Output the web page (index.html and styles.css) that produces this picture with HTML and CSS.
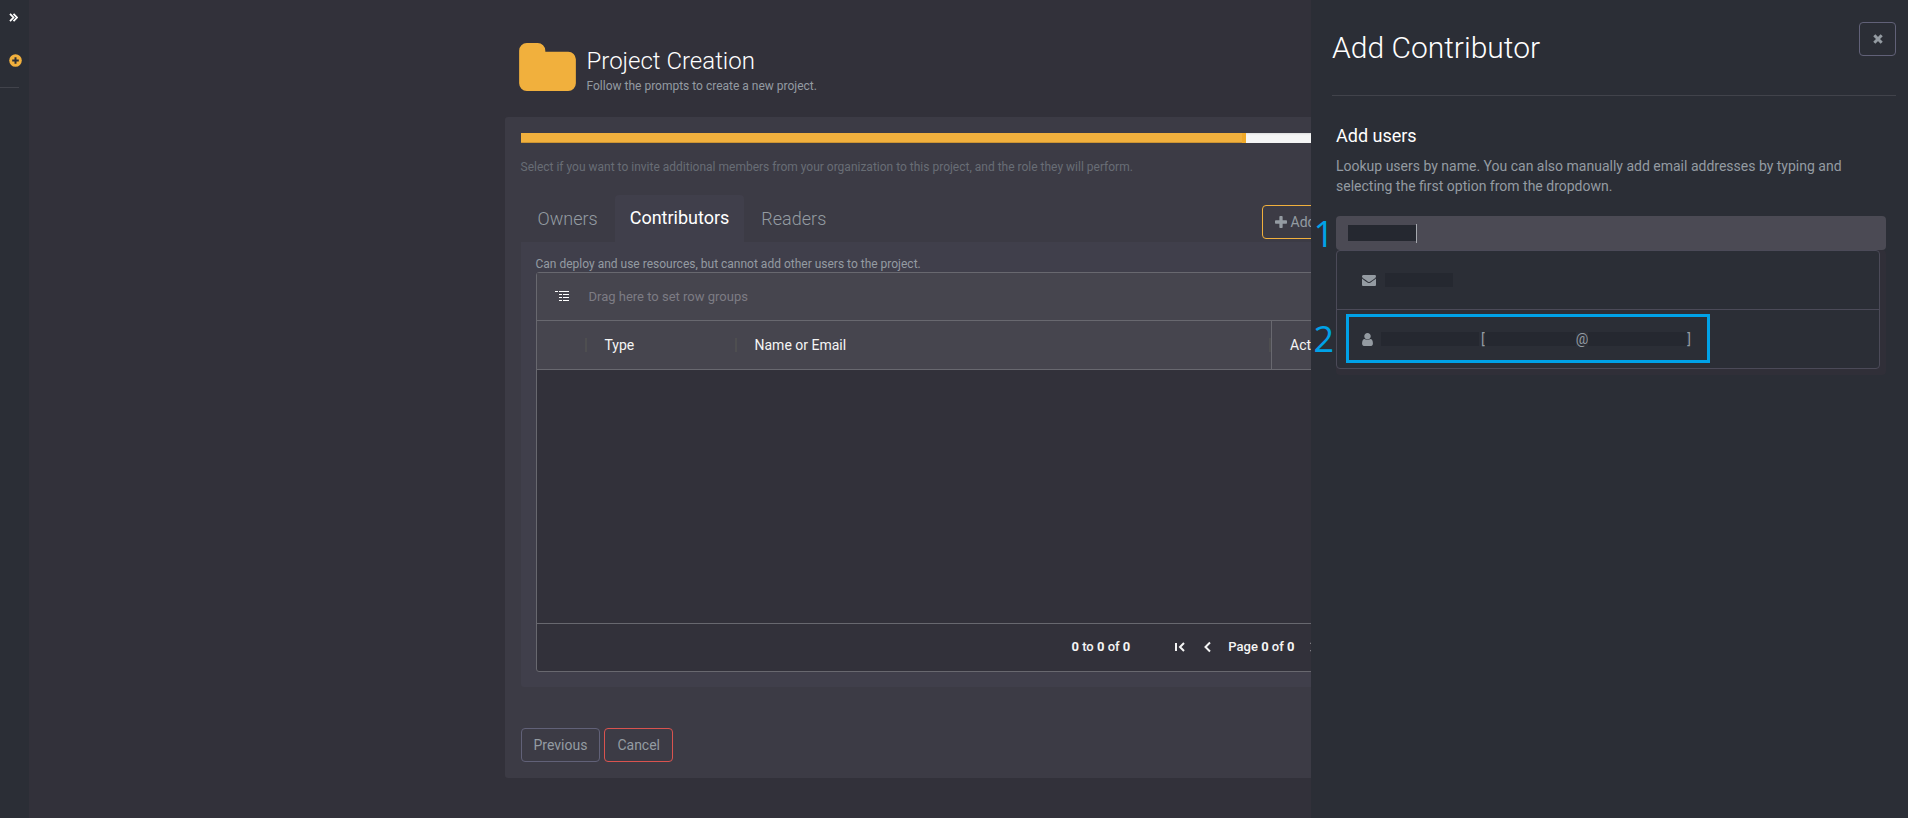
FILE: index.html
```html
<!DOCTYPE html>
<html lang="en">
<head>
    <meta charset="UTF-8">
    <meta name="viewport" content="width=device-width, initial-scale=1.0">
    <title>Project Creation</title>
    <link rel="stylesheet" href="styles.css">
</head>
<body>
    <nav class="sidebar">
        <button class="side-button" aria-label="Expand menu">
            <svg width="9" height="9" viewBox="0 0 9 9"><path d="M1 .8l3.500 3.700L1 8.200M4.500 .8L8 4.500 4.500 8.200" fill="none" stroke="#fff" stroke-width="1.800"/></svg>
        </button>
        <button class="side-button side-add" aria-label="New project">
            <svg width="13" height="13" viewBox="0 0 13 13"><circle cx="6.500" cy="6.500" r="6.300" fill="#f1b03d"/><path d="M6.500 3.200v6.600M3.200 6.500h6.600" stroke="#2b2e36" stroke-width="2"/></svg>
        </button>
        <hr>
    </nav>

    <main class="main">
        <div class="container">
            <header class="page-header">
                <svg class="folder" viewBox="64 128 1664 1408"><path fill="#f1b03d" d="M1728 608v704q0 92-66 158t-158 66h-1216q-92 0-158-66t-66-158v-960q0-92 66-158t158-66h320q92 0 158 66t66 158v32h672q92 0 158 66t66 158z"/></svg>
                <div>
                    <h1>Project Creation</h1>
                    <p>Follow the prompts to create a new project.</p>
                </div>
            </header>

            <section class="card">
                <div class="progress"><div class="progress-bar" style="width: 81%"></div></div>
                <p class="hint">Select if you want to invite additional members from your organization to this project, and the role they will perform.</p>

                <div class="tab-row">
                    <div class="tabs" role="tablist">
                        <button class="tab" role="tab">Owners</button>
                        <button class="tab active" role="tab">Contributors</button>
                        <button class="tab" role="tab">Readers</button>
                    </div>
                    <button class="btn btn-add">
                        <svg width="12" height="12" viewBox="192 128 1408 1408"><path fill="currentColor" d="M1600 736v192q0 40-28 68t-68 28h-416v416q0 40-28 68t-68 28h-192q-40 0-68-28t-28-68v-416h-416q-40 0-68-28t-28-68v-192q0-40 28-68t68-28h416v-416q0-40 28-68t68-28h192q40 0 68 28t28 68v416h416q40 0 68 28t28 68z"/></svg>
                        Add Contributor
                    </button>
                </div>

                <div class="panel">
                    <p class="panel-text">Can deploy and use resources, but cannot add other users to the project.</p>
                    <div class="grid">
                        <div class="group-row">
                            <svg width="14" height="11" viewBox="0 0 14 11"><path d="M0 .5h3M4 .5h10M4 3.500h3M8 3.500h6M4 6.500h3M8 6.500h6M4 9.500h3M8 9.500h6" stroke="#fff" stroke-width="1"/></svg>
                            <span>Drag here to set row groups</span>
                        </div>
                        <table class="grid-table">
                            <thead>
                                <tr>
                                    <th class="col-check"></th>
                                    <th class="col-type">Type</th>
                                    <th class="col-name">Name or Email</th>
                                    <th class="col-actions">Actions</th>
                                </tr>
                            </thead>
                        </table>
                        <div class="grid-body"></div>
                        <div class="paging">
                            <span class="paging-summary"><b>0</b> to <b>0</b> of <b>0</b></span>
                            <button aria-label="First page"><svg width="16" height="16" viewBox="0 0 16 16"><path d="M4 4v8M12 4L8 8l4 4"/></svg></button>
                            <button aria-label="Previous page"><svg width="16" height="16" viewBox="0 0 16 16"><path d="M10 3.500L5.500 8l4.500 4.500"/></svg></button>
                            <span>Page <b>0</b> of <b>0</b></span>
                            <button aria-label="Next page"><svg width="16" height="16" viewBox="0 0 16 16"><path d="M4 3.500L8.500 8 4 12.500"/></svg></button>
                            <button aria-label="Last page"><svg width="16" height="16" viewBox="0 0 16 16"><path d="M12 4v8M4 4l4 4-4 4"/></svg></button>
                        </div>
                    </div>
                </div>

                <div class="actions">
                    <button class="btn">Previous</button>
                    <button class="btn btn-danger">Cancel</button>
                </div>
            </section>
        </div>
    </main>

    <aside class="drawer">
        <div class="drawer-header">
            <h2>Add Contributor</h2>
            <button class="btn btn-close" aria-label="Close">
                <svg width="10" height="10" viewBox="0 0 10 10"><path d="M1.300 1.300l7.400 7.400M8.700 1.300L1.300 8.700" stroke="currentColor" stroke-width="3"/></svg>
            </button>
        </div>
        <div class="drawer-body">
            <h3><label for="lookup">Add users</label></h3>
            <p>Lookup users by name. You can also manually add email addresses by typing and selecting the first option from the dropdown.</p>

            <div class="lookup">
                <div class="field">
                    <span class="mask mask-query"></span>
                    <span class="caret"></span>
                    <input type="text" id="lookup">
                </div>
                <span class="step step-one">1</span>
                <div class="menu-shadow">
                    <ul class="menu">
                        <li>
                            <svg class="mail-icon" width="14" height="11" viewBox="0 256 1792 1408"><path fill="currentColor" d="M1792 710v794q0 66-47 113t-113 47h-1472q-66 0-113-47t-47-113v-794q44 49 101 87 362 246 497 345 57 42 92.500 65.500t94.500 48 110 24.500h2q51 0 110-24.500t94.500-48 92.500-65.500q170-123 498-345 57-39 100-87zm0-294q0 79-49 151t-122 123q-376 261-468 325-10 7-42.500 31t-54 38.500-52 32.500-57.500 27-50 9h-2q-23 0-50-9t-57.500-27-52-32.500-54-38.500-42.500-31q-91-64-262-182.500t-205-142.500q-62-42-117-115.500t-55-136.500q0-78 41.500-130t118.500-52h1472q65 0 112.500 47t47.500 113z"/></svg>
                            <span class="mask mask-email"></span>
                        </li>
                        <li>
                            <svg class="user-icon" width="11" height="13" viewBox="256 128 1280 1536"><path fill="currentColor" d="M1536 1399q0 109-62.500 187t-150.500 78h-854q-88 0-150.500-78t-62.500-187q0-85 8.500-160.500t31.500-152 58.500-131 94-89 134.500-34.500q131 128 313 128t313-128q76 0 134.500 34.500t94 89 58.500 131 31.500 152 8.500 160.500zm-256-887q0 159-112.500 271.500t-271.500 112.500-271.500-112.500-112.500-271.500 112.500-271.500 271.500-112.500 271.500 112.500 112.500 271.500z"/></svg>
                            <span class="mask mask-name"></span>
                            <span>[</span><span class="mask mask-user"></span><span>@</span><span class="mask mask-domain"></span><span>]</span>
                            <div class="highlight"></div>
                        </li>
                    </ul>
                </div>
                <span class="step step-two">2</span>
            </div>
        </div>
    </aside>
</body>
</html>
```
FILE: styles.css
```css
* {
    box-sizing: border-box;
}
body {
    margin: 0;
    min-height: 100vh;
    display: flex;
    overflow: hidden;
    background: #32313a;
    color: #949ba2;
    font-family: Roboto, "Liberation Sans", sans-serif;
    font-size: 14px;
    line-height: 20px;
}
h1, h2, h3, p, ul {
    margin: 0;
    padding: 0;
}
button {
    font: inherit;
    color: inherit;
    background: none;
    border: 0;
    padding: 0;
    cursor: pointer;
}
svg {
    display: block;
    flex: none;
}

/* left rail */
.sidebar {
    flex: none;
    width: 29px;
    background: #2b2e36;
    padding-top: 11px;
}
.side-button {
    display: block;
    height: 12px;
    margin-left: 9px;
}
.side-add {
    height: 13px;
    margin-top: 31px;
}
.sidebar hr {
    width: 19px;
    margin: 20px 0 0;
    border: 0;
    border-top: 1px solid #41434b;
}

/* page */
.main {
    flex: 1;
    min-width: 0;
    padding-top: 43px;
}
.container {
    max-width: 928px;
    margin: 0 auto;
}
.page-header {
    display: flex;
    gap: 11px;
    padding-left: 14px;
    height: 74px;
}
.folder {
    width: 57px;
    height: 48px;
}
.page-header h1 {
    color: #fff;
    font-size: 24px;
    font-weight: 300;
    line-height: 36px;
}
.page-header p {
    font-size: 12px;
    line-height: 14px;
}
.card {
    background: #3c3b45;
    border-radius: 3px;
    padding: 16px;
}
.progress {
    height: 10px;
    background: #f5f5f5;
    box-shadow: inset 0 1px 2px rgba(0, 0, 0, 0.1);
}
.progress-bar {
    height: 10px;
    background: #f1b03d;
    border-right: 4px solid #f0a928;
    box-shadow: inset 0 -1px 0 rgba(0, 0, 0, 0.15);
}
.hint {
    margin-top: 14px;
    font-size: 12px;
    color: #686d75;
}
.tab-row {
    display: flex;
    justify-content: space-between;
    height: 47px;
    margin-top: 18px;
}
.tabs {
    display: flex;
}
.tab {
    padding: 0 17px;
    font-size: 18px;
    font-weight: 300;
}
.tab.active {
    background: #403f4b;
    border-radius: 4px 4px 0 0;
    color: #fff;
    font-weight: 400;
    padding: 0 15px 2px;
}
.btn {
    height: 34px;
    padding: 0 12px;
    border: 1px solid #616178;
    border-radius: 4px;
}
.btn-add {
    display: flex;
    align-items: center;
    gap: 4px;
    margin-top: 10px;
    border-color: #f1b03d;
    width: 155px;
    white-space: nowrap;
}
.btn-danger {
    border-color: #d9534f;
}
.panel {
    background: #403f4b;
    padding: 14px 15px 15px;
    border-radius: 0 0 3px 3px;
}
.panel-text {
    font-size: 12px;
    line-height: 16px;
}
.grid {
    border: 1px solid #68686f;
    border-radius: 3px;
    background: #32313a;
    color: #f5f5f5;
}
.group-row {
    display: flex;
    align-items: center;
    gap: 20px;
    height: 48px;
    padding-left: 18px;
    background: #46454e;
    border-bottom: 1px solid #68686f;
    color: #7d7c84;
    font-size: 13px;
}
.grid-table {
    width: 100%;
    table-layout: fixed;
    border-collapse: collapse;
    background: #46454e;
}
.grid-table th {
    height: 48px;
    padding: 0 18px;
    text-align: left;
    font-weight: 400;
    border-bottom: 1px solid #68686f;
    background: linear-gradient(#4e4e50, #4e4e50) right center / 2px 14px no-repeat;
}
.col-check {
    width: 50px;
}
.col-type {
    width: 150px;
}
.grid-table .col-actions {
    width: 129px;
    border-left: 1px solid #68686f;
    background: none;
}
.grid-body {
    height: 253px;
}
.paging {
    display: flex;
    align-items: center;
    justify-content: flex-end;
    gap: 12px;
    height: 48px;
    padding-right: 50px;
    border-top: 1px solid #68686f;
    font-size: 13px;
    font-weight: 500;
}
.paging-summary {
    margin-right: 30px;
}
.paging path {
    fill: none;
    stroke: #f5f5f5;
    stroke-width: 2;
}
.actions {
    display: flex;
    gap: 4px;
    margin-top: 41px;
}

/* add contributor drawer */
.drawer {
    position: fixed;
    top: 0;
    right: 0;
    bottom: 0;
    width: 597px;
    padding: 22px 12px 0 21px;
    background: #2b2e36;
}
.drawer-header {
    display: flex;
    justify-content: space-between;
    align-items: flex-start;
    height: 74px;
    border-bottom: 1px solid #41434b;
}
.drawer-header h2 {
    color: #fff;
    font-size: 30px;
    font-weight: 300;
    line-height: 52px;
}
.btn-close {
    display: flex;
    align-items: center;
    justify-content: center;
    width: 37px;
    padding: 0;
}
.drawer-body {
    padding: 28px 10px 0 4px;
}
.drawer-body h3 {
    color: #fff;
    font-size: 18px;
    font-weight: 400;
    line-height: 24px;
}
.drawer-body p {
    margin: 8px 0 20px;
}
.lookup {
    position: relative;
}
.field {
    display: flex;
    align-items: center;
    height: 34px;
    padding-left: 12px;
    border-radius: 4px;
    background: #4b4a54;
}
.field input {
    flex: 1;
    border: 0;
    outline: 0;
    background: none;
    color: #fff;
    font: inherit;
}
.caret {
    width: 1px;
    height: 19px;
    background: #a5a8ae;
}
.mask {
    height: 14px;
    background: #252830;
}
.mask-query {
    width: 68px;
    height: 16px;
}
.mask-email {
    width: 68px;
    margin-left: 9px;
}
.mask-name {
    width: 98px;
    margin: 0 2px 0 8px;
}
.mask-user {
    width: 91px;
}
.mask-domain {
    width: 99px;
}
.menu-shadow {
    background: #302f38;
    border-radius: 4px;
    padding: 0 6px 6px 0;
}
.menu {
    list-style: none;
    background: #2b2e36;
    border: 1px solid #4b4a58;
    border-radius: 4px;
}
.menu li {
    position: relative;
    display: flex;
    align-items: center;
    height: 58px;
    padding-left: 25px;
}
.menu li + li {
    height: 59px;
    border-top: 1px solid #4b4a58;
}
.highlight {
    position: absolute;
    top: 4px;
    left: 9px;
    width: 364px;
    height: 49px;
    border: 3px solid #00a2e8;
}
.step {
    position: absolute;
    right: 100%;
    margin-right: 2px;
    color: #00a2e8;
    font-family: "Open Sans", sans-serif;
    font-size: 36px;
    line-height: 36px;
}
.step-one {
    top: 0;
}
.step-two {
    top: 105px;
}
```
